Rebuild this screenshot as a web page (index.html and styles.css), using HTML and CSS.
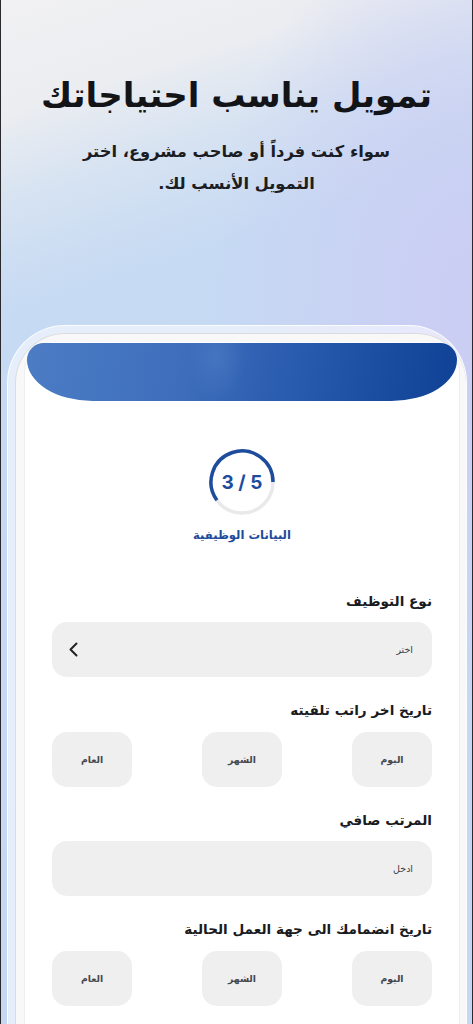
FILE: index.html
```html
<!DOCTYPE html>
<html lang="ar" dir="rtl">
<head>
<meta charset="utf-8">
<title>تمويل يناسب احتياجاتك</title>
<link rel="stylesheet" href="styles.css">
</head>
<body>
<div class="page">
  <header class="hero">
    <h1 class="hero-title">تمويل يناسب احتياجاتك</h1>
    <p class="hero-sub">سواء كنت فرداً أو صاحب مشروع، اختر<br>التمويل الأنسب لك.</p>
  </header>
  <div class="phone">
    <div class="screen">
      <div class="content">
        <div class="banner"></div>
        <div class="progress">
          <svg class="ring" width="70" height="70" viewBox="0 0 70 70">
            <circle cx="35" cy="35" r="31" fill="none" stroke="#e9e9ec" stroke-width="3.5"/>
            <path d="M66 35 A31 31 0 1 0 9.92 53.22" fill="none" stroke="#1d4c9c" stroke-width="3.5" stroke-linecap="butt"/>
          </svg>
          <span class="ring-text">3 / 5</span>
        </div>
        <div class="step-title">البيانات الوظيفية</div>
        <div class="form">
          <div class="field">
            <div class="label">نوع التوظيف</div>
            <div class="input">
              <span class="placeholder">اختر</span>
              <svg class="chev" width="9" height="15" viewBox="0 0 9 15"><polyline points="7.5,1.5 1.5,7.5 7.5,13.5" fill="none" stroke="#222" stroke-width="2" stroke-linecap="round" stroke-linejoin="round"/></svg>
            </div>
          </div>
          <div class="field">
            <div class="label">تاريخ اخر راتب تلقيته</div>
            <div class="options">
              <div class="opt">اليوم</div>
              <div class="opt">الشهر</div>
              <div class="opt">العام</div>
            </div>
          </div>
          <div class="field">
            <div class="label">المرتب صافي</div>
            <div class="input">
              <span class="placeholder">ادخل</span>
            </div>
          </div>
          <div class="field">
            <div class="label">تاريخ انضمامك الى جهة العمل الحالية</div>
            <div class="options">
              <div class="opt">اليوم</div>
              <div class="opt">الشهر</div>
              <div class="opt">العام</div>
            </div>
          </div>
        </div>
      </div>
    </div>
  </div>
</div>
</body>
</html>
```
FILE: styles.css
```css
* { box-sizing: border-box; }
html, body { margin: 0; padding: 0; }
body {
  width: 473px;
  height: 1024px;
  overflow: hidden;
  font-family: "DejaVu Sans", "Noto Sans", sans-serif;
}
.page {
  height: 1024px;
  border-left: 1px solid #2a2a2e;
  border-right: 1px solid #2a2a2e;
  background:
    radial-gradient(ellipse 260px 420px at 100% 30%, rgba(203,205,243,1) 0%, rgba(203,205,243,.6) 45%, rgba(203,205,243,0) 100%),
    linear-gradient(162deg, #f1f1f2 0px, #ebedf1 110px, #d5e2f2 200px, #c6daf3 300px, #c5d8f3 1024px);
  overflow: hidden;
}
.hero {
  padding-top: 67px;
  text-align: center;
}
.hero-title {
  margin: 0;
  font-size: 34px;
  line-height: 56px;
  font-weight: bold;
  color: #121418;
}
.hero-sub {
  margin: 13px 0 0;
  font-size: 16.3px;
  line-height: 32px;
  font-weight: bold;
  color: #1b1d22;
}
.phone {
  margin: 125px 5px 0 6px;
  padding: 7px 0 0 7px;
  border: 1px solid rgba(255,255,255,.85);
  border-bottom: 0;
  border-radius: 58px 58px 0 0;
  background: rgba(255,255,255,.55);
  height: 720px;
}
.screen {
  height: 100%;
  border: 1px solid #dcdcdf;
  border-bottom: 0;
  border-right: 0;
  border-radius: 50px 50px 0 0;
  background: #f8f8f9;
  padding: 8px 6px 0 8px;
}
.content {
  height: 100%;
  background: #fff;
  border-radius: 30px 30px 0 0;
  border-left: 1px solid #eeeeef;
  border-right: 1px solid #eeeeef;
  padding: 1px 2px 0 2px;
}
.banner {
  position: relative;
  height: 58px;
  border-radius: 18px 18px 70px 70px / 18px 18px 44px 44px;
  background: linear-gradient(100deg, #4b7cc4 0%, #3f6fbc 35%, #2a5caf 60%, #1a4ca0 82%, #0f4196 100%);
  overflow: hidden;
}
.banner::after {
  content: "";
  position: absolute;
  left: 160px;
  top: 0;
  width: 60px;
  height: 58px;
  background: radial-gradient(ellipse at 50% 25%, rgba(110,150,215,.25), rgba(110,150,215,0) 70%);
}
.progress {
  position: relative;
  width: 70px;
  height: 70px;
  margin: 46px auto 0;
}
.ring { display: block; }
.ring-text {
  position: absolute;
  inset: 0;
  display: flex;
  align-items: center;
  justify-content: center;
  direction: ltr;
  font-family: "Inter", "DejaVu Sans", sans-serif;
  font-size: 19px;
  font-weight: 700;
  color: #1d4c9c;
}
.step-title {
  margin-top: 8px;
  text-align: center;
  font-size: 11.6px;
  line-height: 20px;
  font-weight: bold;
  color: #1d4c9c;
}
.form {
  padding: 0 25px;
  margin-top: 44px;
  display: flex;
  flex-direction: column;
  gap: 21px;
}
.field {
  display: flex;
  flex-direction: column;
  gap: 9px;
}
.label {
  font-size: 13.6px;
  line-height: 24px;
  font-weight: bold;
  color: #1a1b1f;
}
.input {
  height: 55px;
  border-radius: 15px;
  background: #efeff0;
  display: flex;
  align-items: center;
  justify-content: space-between;
  padding: 0 19px 0 17px;
}
.placeholder {
  font-size: 9.5px;
  color: #3a3b40;
}
.chev { display: block; }
.options {
  display: flex;
  justify-content: space-between;
  margin-top: 1px;
}
.opt {
  width: 80px;
  height: 55px;
  border-radius: 15px;
  background: #efeff0;
  display: flex;
  align-items: center;
  justify-content: center;
  font-size: 9.3px;
  font-weight: bold;
  color: #45474d;
}
```
